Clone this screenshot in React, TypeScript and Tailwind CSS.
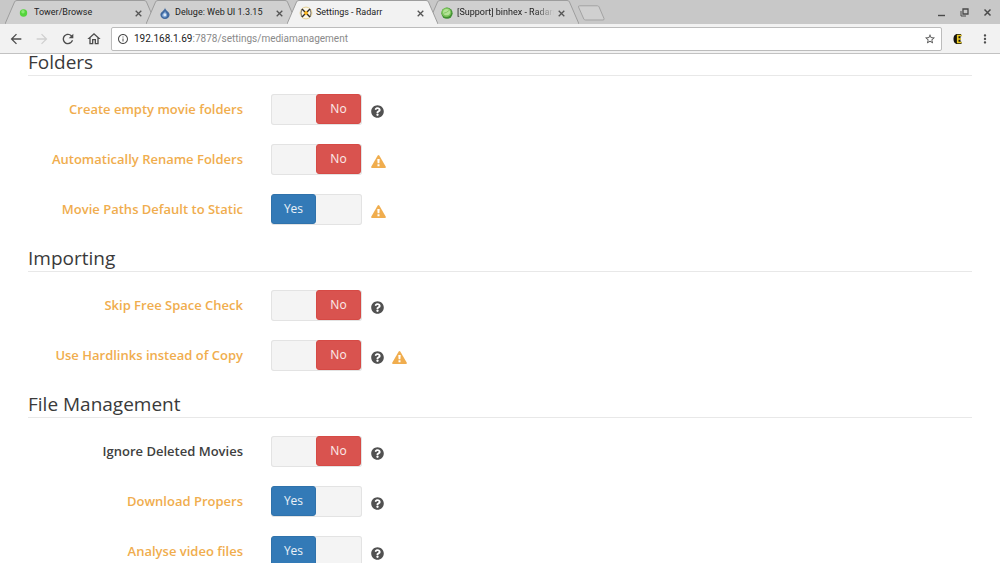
import type { ReactNode } from "react";
import { useState } from "react";
import { FaQuestionCircle } from "react-icons/fa";
import { MdArrowBack, MdArrowForward, MdMoreVert, MdOutlineHome, MdOutlineInfo, MdRefresh, MdStarBorder } from "react-icons/md";
import clsx from "clsx";

type Setting = {
  id: string;
  label: string;
  enabled: boolean;
  advanced?: boolean;
  help?: boolean;
  warning?: boolean;
};

const sections: { title: string; settings: Setting[] }[] = [
  {
    title: "Folders",
    settings: [
      { id: "create-empty", label: "Create empty movie folders", enabled: false, advanced: true, help: true },
      { id: "auto-rename", label: "Automatically Rename Folders", enabled: false, advanced: true, warning: true },
      { id: "static-paths", label: "Movie Paths Default to Static", enabled: true, advanced: true, warning: true },
    ],
  },
  {
    title: "Importing",
    settings: [
      { id: "skip-space", label: "Skip Free Space Check", enabled: false, advanced: true, help: true },
      { id: "hardlinks", label: "Use Hardlinks instead of Copy", enabled: false, advanced: true, help: true, warning: true },
    ],
  },
  {
    title: "File Management",
    settings: [
      { id: "ignore-deleted", label: "Ignore Deleted Movies", enabled: false, help: true },
      { id: "propers", label: "Download Propers", enabled: true, advanced: true, help: true },
      { id: "analyse", label: "Analyse video files", enabled: true, advanced: true, help: true },
    ],
  },
];

function TowerIcon() {
  return (
    <svg viewBox="0 0 14 14" className="h-3.5 w-3.5">
      <circle cx="6.500" cy="7" r="3.700" fill="#55d43c" />
      <circle cx="6" cy="5.800" r="1.700" fill="#8bea74" />
    </svg>
  );
}

function DelugeIcon() {
  return (
    <svg viewBox="0 0 14 14" className="h-3.5 w-3.5">
      <path d="M7 1.500C7 4.500 2.400 5.800 2.400 8.800a4.600 4.200 0 0 0 9.200 0C11.600 5.800 7.400 4.800 7 1.500Z" fill="#41699f" />
      <path d="M4 9.200c.4-2 2.600-2.400 3-4.200.9 1.800 2.200 2.300 2.200 4.100 0 1.700-1.300 2.500-2.600 2.300C5 11.200 4 10.300 4 9.200Z" fill="#7ba3d3" />
      <ellipse cx="6.800" cy="8.800" rx="1.400" ry="1.500" fill="#dfeaf6" />
    </svg>
  );
}

function RadarrIcon() {
  return (
    <svg viewBox="0 0 14 14" className="h-3.5 w-3.5" fill="none">
      <circle cx="7" cy="7" r="5.900" fill="#faf6ea" stroke="#e6d194" />
      <path d="M3 3Q1 7 3 11M11 3Q13 7 11 11" stroke="#7a756d" />
      <path d="M3 3 11 11M11 3 3 11" stroke="#2f2c28" strokeWidth="1.400" />
      <path d="M7 4.600 9.400 7 7 9.400 4.600 7Z" fill="#f5b21f" />
    </svg>
  );
}

function LimeIcon() {
  return (
    <svg viewBox="0 0 14 14" className="h-3.5 w-3.5" fill="none">
      <circle cx="7" cy="7.200" r="5.600" fill="#3f9030" />
      <ellipse cx="6.400" cy="6.400" rx="4.900" ry="4.600" fill="#79c259" />
      <ellipse cx="6.600" cy="6.200" rx="3.500" ry="3.100" fill="#b3e396" />
      <path d="M3.800 7.200 6.600 6.300 9.600 4" stroke="#79c259" strokeWidth=".8" />
    </svg>
  );
}

function WarningIcon() {
  return (
    <svg viewBox="0 0 15 13" className="h-[13px] w-[15px]">
      <path
        d="M6.700.5Q7.500-.5 8.300.5L14.800 11.700Q15.200 13 13.900 13H1.100Q-.2 13 .2 11.700Z"
        fill="#f0ad4e"
      />
      <path d="M6.300 4H8.700L8.400 8.300H6.600ZM6.500 9.300H8.500V11.200H6.500Z" fill="#fff" />
    </svg>
  );
}

const tabs: { title: string; icon: ReactNode; active?: boolean }[] = [
  { title: "Tower/Browse", icon: <TowerIcon /> },
  { title: "Deluge: Web UI 1.3.15", icon: <DelugeIcon /> },
  { title: "Settings - Radarr", icon: <RadarrIcon />, active: true },
  { title: "[Support] binhex - Radarr", icon: <LimeIcon /> },
];

function BrowserTab({ title, icon, active }: { title: string; icon: ReactNode; active?: boolean }) {
  return (
    <div className={clsx("relative -mr-2.5 h-6 w-[151px]", active && "z-10")}>
      <svg className="absolute inset-0 h-full w-full" viewBox="0 0 151 24" preserveAspectRatio="none" aria-hidden>
        <path
          d="M0 24 L9.500 2 Q10 .5 12 .5 H139 Q141 .5 141.500 2 L151 24"
          fill={active ? "#f2f2f2" : "#d0d0d0"}
          stroke="#9d9d9d"
        />
      </svg>
      <div className="relative flex h-full items-center pt-0.5 pr-2.5 pl-3">
        {icon}
        <a
          href="#"
          className={clsx(
            "ml-[3px] min-w-0 flex-1 overflow-hidden text-[9px] whitespace-nowrap text-[#222]",
            title.length > 22 && "[mask-image:linear-gradient(to_right,black_80%,transparent)]",
          )}
        >
          {title}
        </a>
        <button type="button" aria-label={`Close ${title}`} className="p-1">
          <svg viewBox="0 0 7 7" className="h-[7px] w-[7px]" stroke="#555" strokeWidth="1.300">
            <path d="M.7.7l5.600 5.600M6.300.7.7 6.300" />
          </svg>
        </button>
      </div>
    </div>
  );
}

function TabStrip() {
  return (
    <div className="flex h-6 items-center bg-[#c8c8c8] pl-[5px]">
      {tabs.map((tab) => (
        <BrowserTab key={tab.title} {...tab} />
      ))}
      <button type="button" aria-label="New tab" className="ml-2 pt-0.5">
        <svg viewBox="0 0 28 16" className="h-4 w-7">
          <path d="M2.500.8H20.500Q21.500.8 22 1.800L27 13.500Q27.400 15 26 15H8.500Q7.300 15 6.800 14L1.500 2Q1.200.8 2.500.8Z" fill="#d0d0d0" stroke="#a3a3a3" />
        </svg>
      </button>
      <div className="ml-auto flex items-center gap-3.5 pr-2">
        <button type="button" aria-label="Minimize">
          <svg viewBox="0 0 9 9" className="h-[9px] w-[9px]">
            <path d="M1 7.500h7" stroke="#4a4a4a" strokeWidth="1.400" />
          </svg>
        </button>
        <button type="button" aria-label="Restore">
          <svg viewBox="0 0 9 9" className="h-[9px] w-[9px]" fill="none" stroke="#4a4a4a">
            <path d="M3 1h5v5H3z" strokeWidth="1.300" />
            <path d="M1 3v5h5" />
          </svg>
        </button>
        <button type="button" aria-label="Close window">
          <svg viewBox="0 0 9 9" className="h-[9px] w-[9px]" stroke="#4a4a4a" strokeWidth="1.500">
            <path d="M1.500 1.500l6 6M7.500 1.500l-6 6" />
          </svg>
        </button>
      </div>
    </div>
  );
}

function Toolbar() {
  return (
    <div className="flex h-[30px] items-center border-b border-[#c2c2c2] bg-[#f2f2f2] px-2 text-[#4d4d4d]">
      <div className="flex items-center gap-2.5">
        <button type="button" aria-label="Back">
          <MdArrowBack className="h-4 w-4" />
        </button>
        <button type="button" aria-label="Forward" className="text-[#d0d0d0]">
          <MdArrowForward className="h-4 w-4" />
        </button>
        <button type="button" aria-label="Reload">
          <MdRefresh className="h-4 w-4" />
        </button>
        <button type="button" aria-label="Home">
          <MdOutlineHome className="h-4 w-4" />
        </button>
      </div>
      <div className="ml-[9px] flex h-6 flex-1 items-center rounded-xs border border-[#bcbcbc] bg-white px-[5px]">
        <MdOutlineInfo className="h-3 w-3" />
        <a href="#" className="ml-[5px] flex-1 text-[10px] text-[#8a8a8a]">
          <span className="text-[#222]">192.168.1.69</span>:7878/settings/mediamanagement
        </a>
        <button type="button" aria-label="Bookmark this page">
          <MdStarBorder className="h-3 w-3" />
        </button>
      </div>
      <button type="button" aria-label="Extension" className="ml-2.5">
        <svg viewBox="0 0 12 12" className="h-3 w-3" fill="none">
          <path d="M9 1H5.500C2.500 1 1.500 3.500 1.500 6S2.500 11 5.500 11H9.500V9L8.500 8.500V3.500L9.500 3Z" fill="#15130c" />
          <path d="M9.500 2.500H5.700V9.500H9.500M5.700 6H9" stroke="#ecca22" strokeWidth="1.600" />
        </svg>
      </button>
      <button type="button" aria-label="Menu" className="ml-3.5">
        <MdMoreVert className="h-3.5 w-3.5" />
      </button>
    </div>
  );
}

function Toggle({ id, enabled }: { id: string; enabled: boolean }) {
  const [on, setOn] = useState(enabled);

  return (
    <label
      className={clsx(
        "relative flex h-[31px] w-[91px] cursor-pointer rounded-[3px] bg-[#f4f4f4] pr-px pb-px inset-ring inset-ring-[#e3e3e3]",
        !on && "justify-end",
      )}
    >
      <input id={id} type="checkbox" checked={on} onChange={() => setOn(!on)} className="sr-only" />
      <span
        className={clsx(
          "flex w-[45px] items-center justify-center rounded-[3px] border text-xs text-white/90",
          on ? "border-[#2f72ab] bg-[#337ab7]" : "border-[#d64a45] bg-[#d9534f]",
        )}
      >
        {on ? "Yes" : "No"}
      </span>
    </label>
  );
}

function SettingRow({ setting }: { setting: Setting }) {
  return (
    <div className="flex items-center">
      <label
        htmlFor={setting.id}
        className={clsx(
          "w-[215px] pb-0.5 text-right text-[13px] leading-5 font-semibold",
          setting.advanced ? "text-[#f0ad4e]" : "text-[#404040]",
        )}
      >
        {setting.label}
      </label>
      <div className="ml-7">
        <Toggle id={setting.id} enabled={setting.enabled} />
      </div>
      <div className="ml-[9px] flex items-center gap-2 pt-1">
        {setting.help && <FaQuestionCircle className="h-[13px] w-[13px] text-[#515151]" />}
        {setting.warning && <WarningIcon />}
      </div>
    </div>
  );
}

export default function App() {
  return (
    <div className="flex h-screen flex-col overflow-hidden bg-white">
      <header className="shrink-0 font-[Roboto,sans-serif]">
        <TabStrip />
        <Toolbar />
      </header>
      <main className="flex min-h-0 flex-1 flex-col gap-[25px] px-7 font-['Open_Sans',sans-serif]">
        {sections.map((section) => (
          <section key={section.title}>
            <h2 className="border-b border-[#e8e8e8] pb-[5px] text-[19px] leading-4 text-[#3a3a3a]">{section.title}</h2>
            <div className="mt-[18px] flex flex-col gap-[19px]">
              {section.settings.map((setting) => (
                <SettingRow key={setting.id} setting={setting} />
              ))}
            </div>
          </section>
        ))}
      </main>
    </div>
  );
}
